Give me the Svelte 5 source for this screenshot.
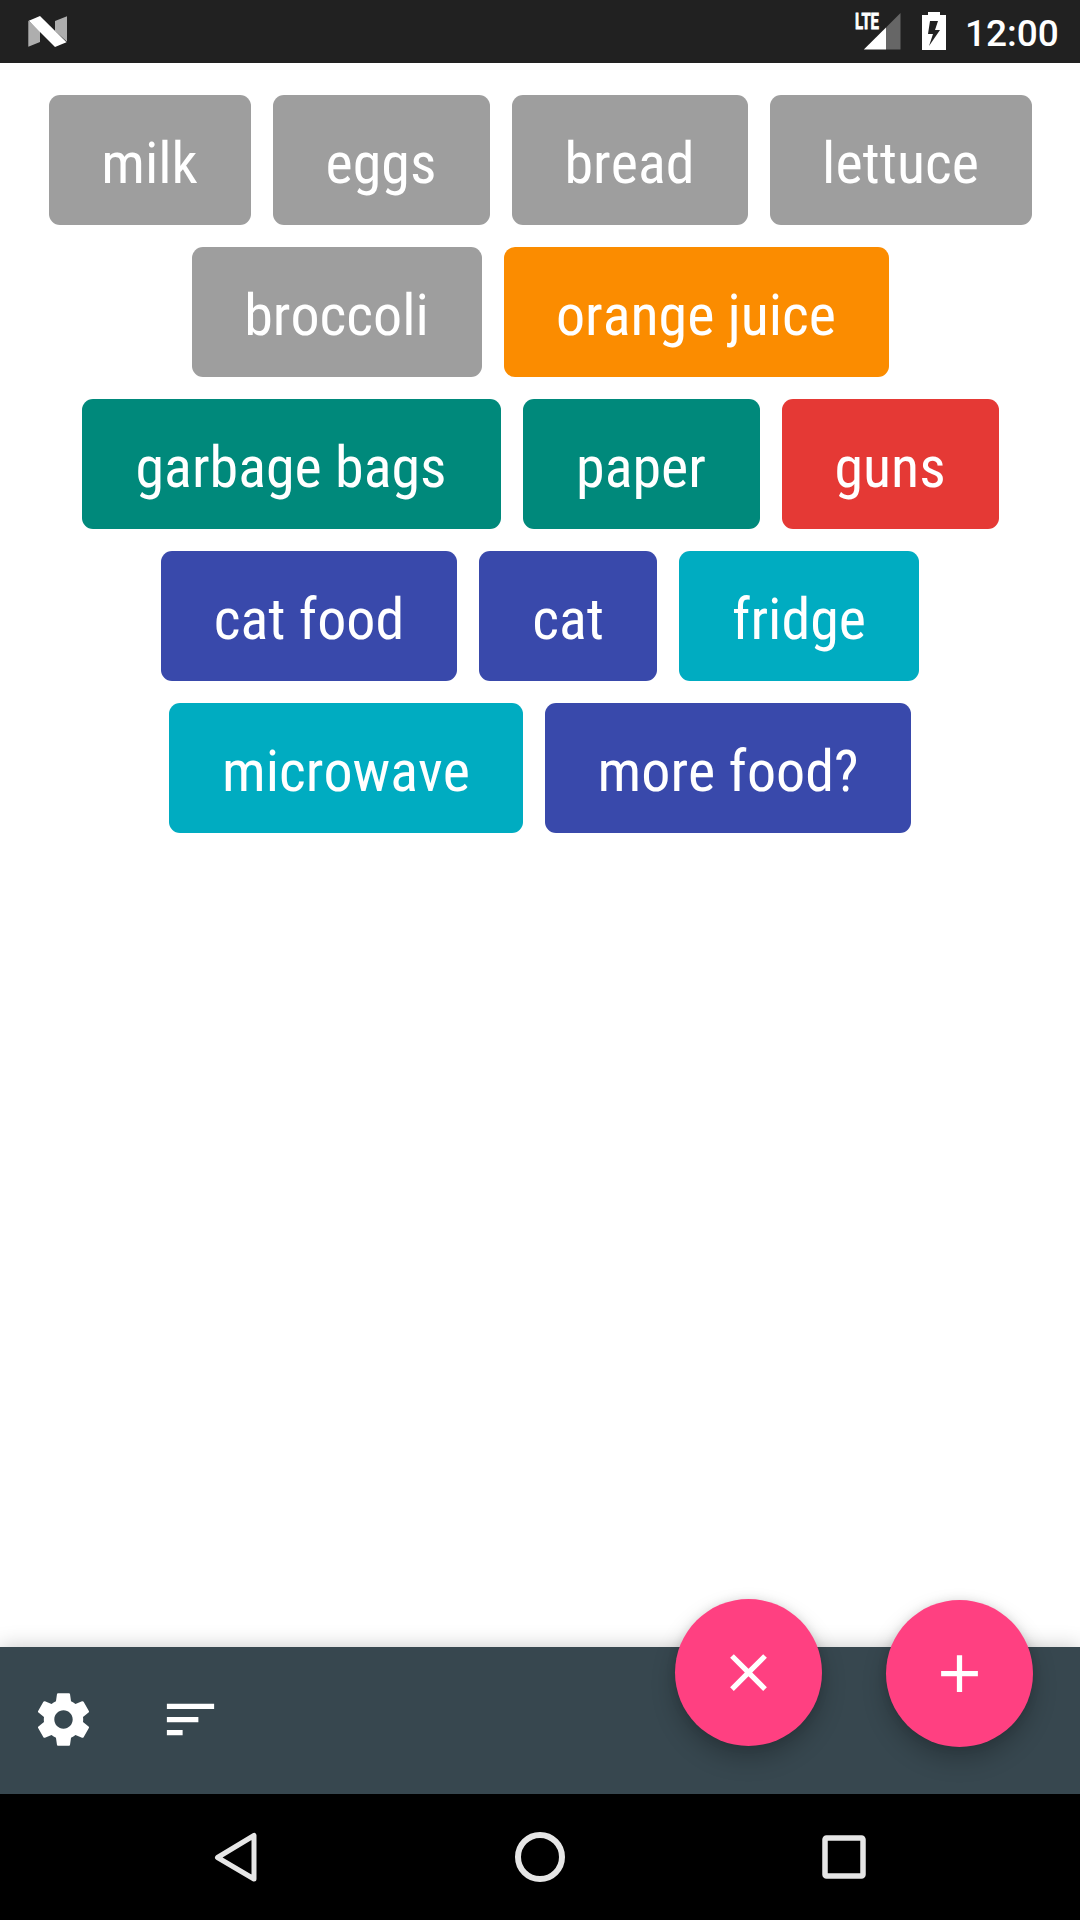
<script>
  const rows = [
    [
      { label: 'milk', width: 202, tone: 'grey' },
      { label: 'eggs', width: 217, tone: 'grey' },
      { label: 'bread', width: 236, tone: 'grey' },
      { label: 'lettuce', width: 262, tone: 'grey' },
    ],
    [
      { label: 'broccoli', width: 290, tone: 'grey' },
      { label: 'orange juice', width: 385, tone: 'orange' },
    ],
    [
      { label: 'garbage bags', width: 419, tone: 'teal' },
      { label: 'paper', width: 237, tone: 'teal' },
      { label: 'guns', width: 217, tone: 'red' },
    ],
    [
      { label: 'cat food', width: 296, tone: 'indigo' },
      { label: 'cat', width: 178, tone: 'indigo' },
      { label: 'fridge', width: 240, tone: 'cyan' },
    ],
    [
      { label: 'microwave', width: 354, tone: 'cyan' },
      { label: 'more food?', width: 366, tone: 'indigo' },
    ],
  ];
</script>

<div class="screen">
  <header class="status">
    <svg class="logo" width="40" height="32" viewBox="0 0 40 32">
      <path d="M.3 4.5 12 15v11L.3 30.800zM39 .2v25.600L27 15V5z" fill="#aeaeae" />
      <path d="M.8 4.700 12 0 38.500 26.200 27 31z" fill="#fff" />
    </svg>
    <div class="indicators">
      <svg class="signal" width="48" height="40" viewBox="0 0 48 40">
        <path d="M45.500 3v36.500H31V17.500z" fill="#666" />
        <path d="M31 17.500v22H8.800z" fill="#fff" />
        <text x="0" y="19" textLength="24" lengthAdjust="spacingAndGlyphs">LTE</text>
      </svg>
      <svg class="battery" width="24" height="38" viewBox="0 0 24 38">
        <path fill-rule="evenodd" fill="#fff" d="M6 0h12v3h6v35H0V3h6zM8 9 6 22h5L7 34 18 18h-5l3-9z" />
      </svg>
      <span class="clock">12:00</span>
    </div>
  </header>

  <main class="list">
    {#each rows as row}
      <div class="row">
        {#each row as chip}
          <button class="chip {chip.tone}" style:width="{chip.width}px"><span>{chip.label}</span></button>
        {/each}
      </div>
    {/each}
  </main>

  <footer class="bar">
    <svg width="63" height="63" viewBox="0 0 24 24" fill="#fff">
      <path d="M19.430 12.980c.04-.32.07-.64.07-.98s-.03-.66-.07-.98l2.110-1.650c.19-.15.24-.42.12-.64l-2-3.460c-.12-.22-.39-.3-.61-.22l-2.490 1c-.52-.4-1.080-.73-1.690-.98l-.38-2.650C14.460 2.180 14.250 2 14 2h-4c-.25 0-.46.18-.49.42l-.38 2.650c-.61.25-1.170.59-1.690.98l-2.490-1c-.23-.09-.49 0-.61.22l-2 3.460c-.13.22-.07.49.12.64l2.110 1.650c-.04.32-.07.65-.07.98s.03.66.07.98l-2.110 1.650c-.19.15-.24.42-.12.64l2 3.460c.12.22.39.3.61.22l2.490-1c.52.4 1.080.73 1.690.98l.38 2.650c.03.24.24.42.49.42h4c.25 0 .46-.18.49-.42l.38-2.650c.61-.25 1.170-.59 1.690-.98l2.490 1c.23.09.49 0 .61-.22l2-3.460c.12-.22.07-.49-.12-.64l-2.110-1.650zM12 15.500c-1.930 0-3.500-1.570-3.500-3.500s1.570-3.500 3.500-3.500 3.500 1.570 3.500 3.500-1.570 3.500-3.500 3.500z" />
    </svg>
    <svg width="63" height="63" viewBox="0 0 24 24" fill="#fff">
      <path d="M3 18h6v-2H3v2zM3 6v2h18V6H3zm0 7h12v-2H3v2z" />
    </svg>
    <button class="fab clear" aria-label="Clear">
      <svg width="63" height="63" viewBox="0 0 24 24" fill="#fff">
        <path d="M19 6.410 17.590 5 12 10.590 6.410 5 5 6.410 10.590 12 5 17.590 6.410 19 12 13.410 17.590 19 19 17.590 13.410 12z" />
      </svg>
    </button>
    <button class="fab add" aria-label="Add">
      <svg width="63" height="63" viewBox="0 0 24 24" fill="#fff">
        <path d="M19 13h-6v6h-2v-6H5v-2h6V5h2v6h6v2z" />
      </svg>
    </button>
  </footer>

  <nav class="nav">
    <svg width="60" height="60" viewBox="0 0 60 60"><path d="M48 8.500v43.500L11.500 30.500z" /></svg>
    <svg width="60" height="60" viewBox="0 0 60 60"><circle cx="30" cy="30" r="22" stroke-width="6" /></svg>
    <svg width="60" height="60" viewBox="0 0 60 60"><rect x="11" y="11" width="38" height="38" rx="1.500" stroke-width="5.500" /></svg>
  </nav>
</div>

<style>
  :global(body) {
    margin: 0;
  }
  .screen {
    width: 1080px;
    height: 1920px;
    display: flex;
    flex-direction: column;
    overflow: hidden;
    background: #fff;
    font-family: 'Roboto Condensed', Roboto, sans-serif;
  }
  svg {
    display: block;
  }
  button {
    border: 0;
    padding: 0;
    margin: 0;
    font: inherit;
  }
  .status {
    height: 63px;
    box-sizing: border-box;
    flex: none;
    display: flex;
    justify-content: space-between;
    align-items: flex-start;
    padding: 0 21px 0 28px;
    background: #212121;
    color: #fff;
  }
  .logo {
    margin-top: 16px;
  }
  .indicators {
    display: flex;
    align-items: flex-start;
  }
  .signal {
    margin: 10px 19px 0 0;
  }
  .signal text {
    font: 700 21.500px Roboto, sans-serif;
    fill: #fff;
    stroke: #fff;
    stroke-width: 0.8px;
  }
  .battery {
    margin: 12px 19px 0 0;
  }
  .clock {
    width: 94px;
    margin-top: 12px;
    font: 500 37px/44px Roboto, sans-serif;
    white-space: nowrap;
  }
  .list {
    flex: 1;
    display: flex;
    flex-direction: column;
    align-items: center;
    gap: 22px;
    padding-top: 32px;
  }
  .row {
    display: flex;
    gap: 22px;
  }
  .chip {
    height: 130px;
    box-sizing: border-box;
    padding-top: 6px;
    flex: none;
    display: flex;
    justify-content: center;
    align-items: center;
    border-radius: 11px;
    color: #fff;
    font-size: 58px;
    font-stretch: 75%;
    font-kerning: none;
    line-height: 68px;
    white-space: nowrap;
  }
  .grey { background: #9e9e9e; }
  .orange { background: #fb8c00; }
  .teal { background: #00897b; }
  .red { background: #e53935; }
  .indigo { background: #3949ab; }
  .cyan { background: #00acc1; }
  .bar {
    position: relative;
    height: 147px;
    box-sizing: border-box;
    flex: none;
    display: flex;
    gap: 64px;
    padding: 41px 32px 0;
    background: #37474f;
    box-shadow: 0 0 20px rgba(0, 0, 0, 0.22);
  }
  /* Floating buttons straddle the top edge of the bar. */
  .fab {
    position: absolute;
    width: 147px;
    height: 147px;
    border-radius: 50%;
    background: #ff4081;
    display: flex;
    align-items: center;
    justify-content: center;
    box-shadow: 0 12px 24px rgba(0, 0, 0, 0.24), 0 0 10px rgba(0, 0, 0, 0.1);
  }
  .clear {
    right: 258px;
    top: -48px;
  }
  .add {
    right: 47px;
    top: -47px;
  }
  .nav {
    position: relative;
    height: 126px;
    flex: none;
    display: flex;
    align-items: center;
    justify-content: center;
    gap: 244px;
    background: #000;
  }
  .nav svg {
    fill: none;
    stroke: #e6e6e6;
    stroke-width: 5;
    stroke-linejoin: round;
  }
</style>
